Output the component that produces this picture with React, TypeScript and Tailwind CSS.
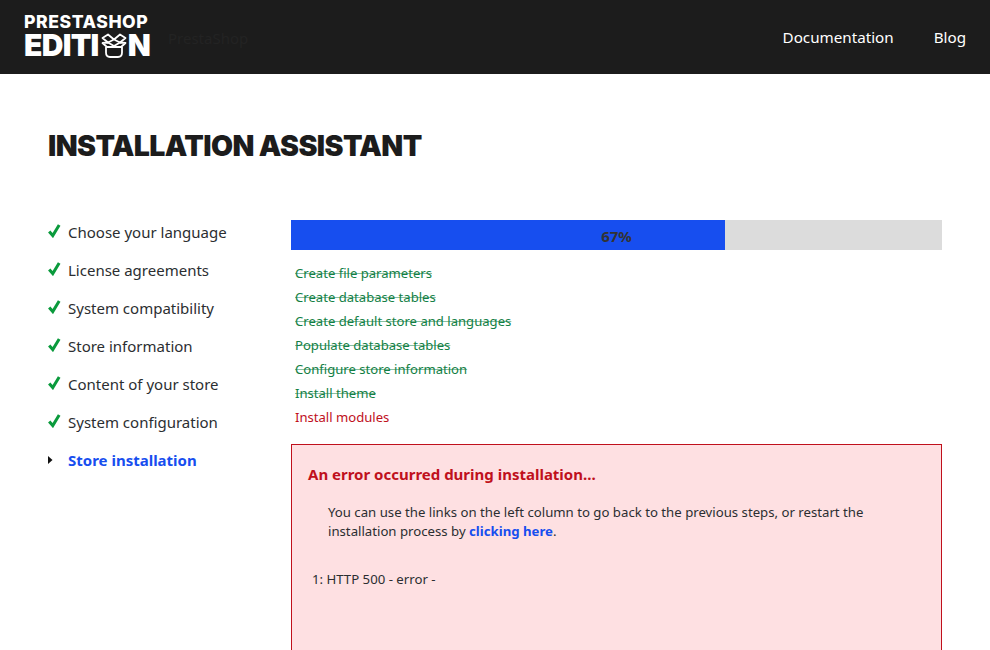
import React from "react";

const steps = [
  "Choose your language",
  "License agreements",
  "System compatibility",
  "Store information",
  "Content of your store",
  "System configuration",
];

const tasks = [
  "Create file parameters",
  "Create database tables",
  "Create default store and languages",
  "Populate database tables",
  "Configure store information",
  "Install theme",
];

function Check() {
  return (
    <svg width="13" height="14" viewBox="0 0 13 14" className="-mt-[3px] block shrink-0">
      <path d="M1.2 7.4 L4.8 11.6 L11.2 1" fill="none" stroke="#0a9a3c" strokeWidth="3" />
    </svg>
  );
}

function BoxIcon() {
  return (
    <svg width="26" height="25" viewBox="0 0 26 25" className="shrink-0" fill="none" stroke="#fff" strokeWidth="1.8" strokeLinejoin="round">
      <path d="M13 6.5 L7 1.5 L1.5 5 L7 9.5 L13 6.5 L19 1.5 L24.5 5 L19 9.5 L13 6.5" />
      <path d="M1.5 10 L7 9.5 L13 13 L19 9.5 L24.5 10 L20 14 L6 14 Z" />
      <path d="M5 14 V19.5 Q5 24 9 24 H17 Q21 24 21 19.5 V14" />
    </svg>
  );
}

export default function App() {
  return (
    <div className="h-[650px] w-[990px] overflow-hidden bg-white font-['Noto_Sans',sans-serif] text-[#2b2e31]">
      <header className="flex h-[74px] items-center justify-between bg-[#1c1c1c] pl-6 pr-6">
        <div className="flex items-center">
          <div className="-mt-[3px] flex w-[126px] flex-col gap-[2px] font-['Inter',sans-serif] font-black leading-none text-white">
            <span className="whitespace-nowrap text-[17.6px] font-extrabold leading-[18px] tracking-[0.55px]">PRESTASHOP</span>
            <span className="flex h-[25px] items-center text-[30px] leading-[25px]">
              <span className="tracking-[-0.7px]">EDITI</span>
              <span className="ml-[2px] flex">
                <BoxIcon />
              </span>
              <span className="ml-[1px]">N</span>
            </span>
          </div>
          <span className="ml-[18px] mt-[3px] text-[15px] text-[#232323]">PrestaShop</span>
        </div>
        <nav className="mt-[1px] flex items-center gap-10 text-[15.2px] text-white">
          <span>Documentation</span>
          <span>Blog</span>
        </nav>
      </header>

      <main className="px-12">
        <h1 className="mt-[54px] font-['Inter',sans-serif] text-[28.5px] font-black leading-[36px] tracking-[-0.6px] text-[#1c1c1c]">
          INSTALLATION ASSISTANT
        </h1>

        <div className="mt-[56px] flex">
          <ul className="w-[243px] shrink-0">
            {steps.map((s) => (
              <li key={s} className="mb-[14px] flex h-[24px] items-center gap-[7px] text-[15px]">
                <span className="w-[13px]">
                  <Check />
                </span>
                <span>{s}</span>
              </li>
            ))}
            <li className="flex h-[24px] items-center gap-[7px] text-[15px] font-bold text-[#174eef]">
              <span className="flex w-[13px]">
                <svg width="5" height="8" viewBox="0 0 5 8">
                  <path d="M0 0 L4.5 4 L0 8 Z" fill="#111" />
                </svg>
              </span>
              <span>Store installation</span>
            </li>
          </ul>

          <div className="w-[651px]">
            <div className="relative flex h-[30px] bg-[#dcdcdc]">
              <div className="h-full w-[66.6%] bg-[#174eef]" />
              <span className="absolute inset-0 flex items-center justify-center pt-[2px] text-[15px] font-bold text-[#333]">67%</span>
            </div>

            <ul className="mt-[11px] pl-1 text-[13.1px]">
              {tasks.map((t) => (
                <li key={t} className="h-[24px] leading-[24px] text-[#137f45] line-through decoration-[#137f45]/50">
                  {t}
                </li>
              ))}
              <li className="h-[24px] leading-[24px] text-[#c0101c]">Install modules</li>
            </ul>

            <div className="mt-[15px] h-[260px] border border-[#c0101c] bg-[#fee0e2] px-4 pt-[17px] text-[13.2px]">
              <h2 className="text-[15px] font-bold leading-[24px] text-[#c0101c]">An error occurred during installation...</h2>
              <p className="mt-[17px] pl-5 leading-[19px]">
                You can use the links on the left column to go back to the previous steps, or restart the installation process by{" "}
                <a className="font-bold text-[#174eef]">clicking here</a>.
              </p>
              <p className="mt-[28px] pl-1 leading-[20px]">1: HTTP 500 - error -</p>
            </div>
          </div>
        </div>
      </main>
    </div>
  );
}
